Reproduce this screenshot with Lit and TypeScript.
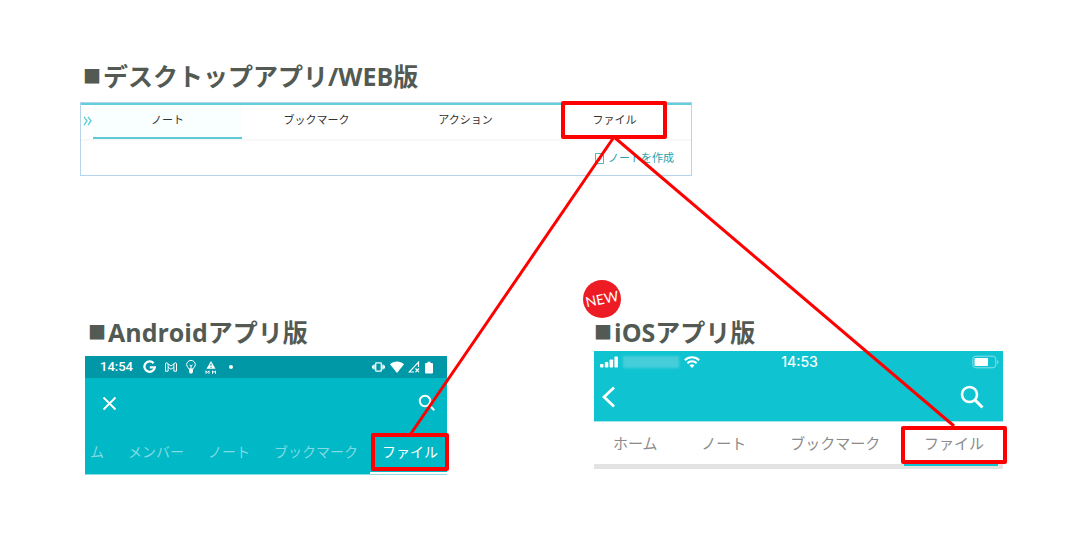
import { LitElement, html, css, svg } from "lit";
import { customElement, state } from "lit/decorators.js";

interface Point {
  x: number;
  y: number;
}

@customElement("app-root")
export class AppRoot extends LitElement {
  static styles = css`
    :host {
      display: block;
      position: relative;
      min-height: 100vh;
      background: #fff;
      box-sizing: border-box;
      padding: 58px 74px 24px 80px;
      font-family: "Open Sans", "Noto Sans CJK JP", sans-serif;
      color: #333;
    }
    * {
      box-sizing: border-box;
    }
    button,
    a {
      font: inherit;
      color: inherit;
      background: none;
      border: 0;
      padding: 0;
      margin: 0;
      text-decoration: none;
      white-space: nowrap;
    }
    svg {
      display: block;
      flex: none;
    }
    h2 {
      display: flex;
      align-items: center;
      gap: 2px;
      margin: 0;
      height: 36px;
      padding-left: 3px;
      font-size: 25px;
      line-height: 36px;
      font-weight: 700;
      color: #535a53;
      white-space: nowrap;
    }
    .square {
      font-size: 18px;
    }
    .mark {
      position: relative;
      display: inline-block;
    }
    .mark::after {
      content: "";
      position: absolute;
      z-index: 2;
      top: 50%;
      left: 50%;
      width: 106px;
      height: 38px;
      margin: -19px 0 0 -53px;
      border: 4px solid #f00;
      border-radius: 2px;
      box-sizing: border-box;
    }
    .mark.narrow::after {
      width: 78px;
      margin-left: -39px;
    }
    .lines {
      position: absolute;
      inset: 0;
      width: 100%;
      height: 100%;
      z-index: 3;
      pointer-events: none;
    }

    .desktop {
      width: 66.3%;
      margin-bottom: 138px;
    }
    .desktop .panel {
      margin-top: 8px;
      border: 1px solid #b5d3ea;
    }
    .desktop nav {
      display: flex;
      border-top: 2px solid #5fd0da;
      border-bottom: 2px solid #f8f8f8;
      padding-right: 2px;
      font-size: 11px;
      line-height: 16px;
      height: 38px;
    }
    .desktop .expand {
      width: 12px;
      display: flex;
      justify-content: center;
      align-items: center;
      padding-bottom: 2px;
      color: #5fcdd7;
    }
    .desktop .tab {
      flex: 1;
      padding-bottom: 2px;
      border-bottom: 2px solid transparent;
    }
    .desktop .tab.on {
      background: #f9feff;
      border-color: #5bcad3;
    }
    .desktop .tools {
      display: flex;
      justify-content: flex-end;
      padding: 0 17px;
      height: 34px;
    }
    .desktop .create {
      display: flex;
      align-items: center;
      gap: 4px;
      font-size: 11px;
      line-height: 16px;
      color: #2aa0ab;
    }

    .phones {
      display: grid;
      grid-template-columns: minmax(0, 362fr) minmax(0, 409fr);
      column-gap: 147px;
      padding-left: 5px;
      align-items: start;
    }
    .bar,
    .status {
      display: flex;
      align-items: center;
      justify-content: space-between;
      color: #fff;
    }
    .group {
      display: flex;
      align-items: center;
    }

    .android .screen {
      margin-top: 6px;
      background: #00b8c6;
      border-bottom: 1px solid #8adfe6;
    }
    .android .status {
      height: 22px;
      padding: 0 12px 0 15px;
      background: #0097a7;
      font: 500 13px/16px Roboto, sans-serif;
    }
    .android .icons {
      gap: 9px;
      margin-left: 10px;
    }
    .android .sys {
      gap: 3px;
    }
    .android .bar {
      height: 52px;
      padding: 0 11px 2px 17px;
    }
    .android nav {
      display: flex;
      justify-content: flex-end;
      height: 44px;
      font-size: 14px;
      line-height: 20px;
      color: #80dbe2;
    }
    .android .tab {
      padding: 2px 12px 0;
      border-bottom: 2px solid transparent;
    }
    .android .tab.on {
      padding-right: 9px;
      color: #fff;
      border-color: #fff;
    }

    .ios {
      position: relative;
    }
    .ios h2 {
      padding-left: 0;
    }
    .badge {
      position: absolute;
      top: -34px;
      left: -11px;
      width: 38px;
      height: 38px;
      border-radius: 50%;
      background: #ed1c24;
      color: #fff;
      font: 400 14px/38px Lato, sans-serif;
      text-align: center;
    }
    .badge span {
      display: block;
      transform: rotate(-12deg);
    }
    .ios .screen {
      margin-top: 1px;
    }
    .ios .status {
      display: grid;
      grid-template-columns: 1fr auto 1fr;
      height: 22px;
      padding: 0 4px 0 6px;
      background: #10c3d1;
      font: 500 14px/16px Inter, sans-serif;
    }
    .ios .sys {
      gap: 5px;
    }
    .carrier {
      width: 56px;
      height: 12px;
      background: #45ced9;
      filter: blur(1px);
    }
    .ios .battery {
      justify-self: end;
    }
    .ios .bar {
      height: 48px;
      padding: 0 19px 0 8px;
      background: #10c3d1;
    }
    .ios nav {
      display: flex;
      justify-content: space-between;
      height: 48px;
      padding: 0 19px;
      border-top: 1px solid #a6e6eb;
      border-bottom: 5px solid #e3e3e3;
      font-size: 15px;
      line-height: 20px;
      color: #8b8b8b;
    }
    .ios .mark::after {
      margin-top: -17px;
    }
    .ios .tab.on {
      position: relative;
    }
    .ios .tab.on::before {
      content: "";
      position: absolute;
      left: -20px;
      right: -14px;
      bottom: -2px;
      height: 2px;
      background: #10c3d1;
    }
  `;

  @state() private points: Point[] = [];
  private observer = new ResizeObserver(() => this.measure());

  firstUpdated() {
    this.measure();
    this.observer.observe(this);
    document.fonts.ready.then(() => this.measure());
  }

  disconnectedCallback() {
    super.disconnectedCallback();
    this.observer.disconnect();
  }

  // The lines join the bottom of the first marked tab to the tops of the others.
  private measure() {
    const base = this.getBoundingClientRect();
    const marks = [...this.renderRoot.querySelectorAll(".mark")];
    this.points = marks.map((m, i) => {
      const r = m.getBoundingClientRect();
      const half = i === 0 ? 17 : -17;
      return {
        x: Math.round(r.left + r.width / 2 - base.left),
        y: Math.round(r.top + r.height / 2 - base.top + half),
      };
    });
  }

  private renderLines() {
    const [from, ...to] = this.points;
    return html`<svg class="lines" aria-hidden="true">
      ${to.map(
        (p) => svg`<line x1=${from.x} y1=${from.y} x2=${p.x} y2=${p.y} stroke="#f00" stroke-width="3" />`
      )}
    </svg>`;
  }

  private renderDesktop() {
    return html`<section class="desktop">
      <h2><span class="square">■</span>デスクトップアプリ/WEB版</h2>
      <div class="panel">
        <nav>
          <button class="expand" aria-label="展開">
            <svg width="9" height="10" viewBox="0 0 9 10" fill="none" stroke="currentColor" stroke-width="1.4">
              <path d="M1 .8l3 4.200-3 4.200M5 .8l3 4.200-3 4.200" />
            </svg>
          </button>
          <button class="tab on">ノート</button>
          <button class="tab">ブックマーク</button>
          <button class="tab">アクション</button>
          <button class="tab"><span class="mark">ファイル</span></button>
        </nav>
        <div class="tools">
          <a class="create" href="#">
            <svg width="9" height="11" viewBox="0 0 9 11" fill="none" stroke="currentColor" stroke-width="0.8">
              <path d="M.5 .5h8v10h-8zM4.500 4v4M2.500 6h4" />
            </svg>
            ノートを作成
          </a>
        </div>
      </div>
    </section>`;
  }

  private renderAndroid() {
    return html`<section class="android">
      <h2><span class="square">■</span>Androidアプリ版</h2>
      <div class="screen">
        <div class="status">
          <div class="group">
            <span>14:54</span>
            <div class="group icons">
              <svg width="13" height="14" viewBox="0 0 13 14" fill="none" stroke="#fff" stroke-width="2.300">
                <path d="M10.600 3.200A5.200 5.200 0 1 0 11.800 7.300H6.800" />
              </svg>
              <svg width="12" height="10" viewBox="0 0 12 10" fill="none" stroke="#fff" stroke-width="1">
                <path d="M.5 9.200V1.600Q.7.400 1.900.9L6 4l4.100-3.100q1.200-.5 1.400.7v7.600H8.900V5.200L6 7.300 3.100 5.200v4zM3.100 5.200V1.900M8.900 5.200V1.900" />
              </svg>
              <svg width="10" height="14" viewBox="0 0 10 14" fill="none" stroke="#fff" stroke-width="1">
                <path d="M3 9C2.500 7.500.7 6.800.7 4.700a4.300 4.300 0 0 1 8.600 0C9.300 6.800 7.500 7.500 7 9zM3.500 5l1.500 1 1.500-1M5 6v3" />
                <path d="M3 9h4v3l-1 1.500H4L3 12z" fill="#fff" stroke="none" />
              </svg>
              <svg width="12" height="13" viewBox="0 0 12 13">
                <path d="M6 0l4.500 7.800h-9z" fill="#fff" />
                <path d="M6 2.600v2.600M6 6v1" stroke="#0097a7" stroke-width="1" />
                <path d="M1 12.800V9.800l1.500 1.700L4 9.800v3M7.500 12.800V9.800L9 11.500l1.500-1.700v3" fill="none" stroke="#fff" />
              </svg>
              <svg width="12" height="6" viewBox="0 0 12 6"><circle cx="5" cy="3" r="2" fill="#fff" /></svg>
            </div>
          </div>
          <div class="group sys">
            <svg width="14" height="10" viewBox="0 0 14 10" fill="none" stroke="#fff" stroke-width="1.300">
              <rect x="3.700" y=".8" width="5.600" height="8.400" rx=".8" />
              <path d="M2.100 2.500v5M.7 3.500v3M10.900 2.500v5M12.300 3.500v3" />
            </svg>
            <svg width="16" height="12" viewBox="0 0 16 12">
              <path d="M8 12L1 3.200C3 1.300 5.500.5 8 .5s5 .8 7 2.700z" fill="#fff" />
            </svg>
            <svg width="12" height="12" viewBox="0 0 12 12" fill="none" stroke="#fff" stroke-width="1.200">
              <path d="M6 11H1.200L10.500 1.200V6M7.500 7.500l3.500 3.700M11 7.500l-3.500 3.700" />
            </svg>
            <svg width="12" height="13" viewBox="0 0 12 13">
              <path d="M4.500 2V.7h3V2H9a1 1 0 0 1 1 1v8.500a1 1 0 0 1-1 1H3a1 1 0 0 1-1-1V3a1 1 0 0 1 1-1z" fill="#fff" />
            </svg>
          </div>
        </div>
        <div class="bar">
          <button aria-label="閉じる">
            <svg width="15" height="15" viewBox="0 0 15 15" stroke="#fff" stroke-width="1.900">
              <path d="M1.500 1.500l12 12M13.500 1.500l-12 12" />
            </svg>
          </button>
          <button aria-label="検索">
            <svg width="18" height="18" viewBox="0 0 18 18" fill="none" stroke="#fff" stroke-width="2">
              <circle cx="7" cy="7" r="5.200" />
              <path d="M10.800 10.800l5.500 5.500" />
            </svg>
          </button>
        </div>
        <nav>
          <button class="tab">ム</button>
          <button class="tab">メンバー</button>
          <button class="tab">ノート</button>
          <button class="tab">ブックマーク</button>
          <button class="tab on"><span class="mark narrow">ファイル</span></button>
        </nav>
      </div>
    </section>`;
  }

  private renderIos() {
    return html`<section class="ios">
      <div class="badge"><span>NEW</span></div>
      <h2><span class="square">■</span>iOSアプリ版</h2>
      <div class="screen">
        <div class="status">
          <div class="group sys">
            <svg width="18" height="12" viewBox="0 0 18 12" fill="#fff">
              <rect x="0" y="8" width="3.500" height="3.500" rx=".8" />
              <rect x="4.800" y="6" width="3.500" height="5.500" rx=".8" />
              <rect x="9.600" y="3.500" width="3.500" height="8" rx=".8" />
              <rect x="14.400" y=".5" width="3.500" height="11" rx=".8" />
            </svg>
            <span class="carrier"></span>
            <svg width="16" height="12" viewBox="0 0 16 12" fill="none" stroke="#fff" stroke-width="2">
              <path d="M.8 4.300a10.300 10.300 0 0 1 14.400 0M3.400 7.200a6.600 6.600 0 0 1 9.200 0" />
              <path d="M8 12L5.600 9.500a3.400 3.400 0 0 1 4.800 0z" fill="#fff" stroke="none" />
            </svg>
          </div>
          <span>14:53</span>
          <svg class="battery" width="27" height="14" viewBox="0 0 27 14" fill="none">
            <rect x=".8" y="1.200" width="23" height="11.600" rx="3" stroke="#8be0e7" />
            <rect x="2.500" y="3" width="13.500" height="8" rx="1" fill="#fff" />
            <path d="M25.300 5v4q1.200-.6 1.200-2t-1.200-2z" fill="#8be0e7" />
          </svg>
        </div>
        <div class="bar">
          <button aria-label="戻る">
            <svg width="14" height="22" viewBox="0 0 14 22" fill="none" stroke="#fff" stroke-width="2.800">
              <path d="M12 1.500L2 11l10 9.500" />
            </svg>
          </button>
          <button aria-label="検索">
            <svg width="24" height="24" viewBox="0 0 24 24" fill="none" stroke="#fff" stroke-width="2.600">
              <circle cx="9.500" cy="9.500" r="7.500" />
              <path d="M15 15l7.500 7.500" stroke-width="3" />
            </svg>
          </button>
        </div>
        <nav>
          <button class="tab">ホーム</button>
          <button class="tab">ノート</button>
          <button class="tab">ブックマーク</button>
          <button class="tab on"><span class="mark">ファイル</span></button>
        </nav>
      </div>
    </section>`;
  }

  render() {
    return html`
      ${this.renderDesktop()}
      <div class="phones">${this.renderAndroid()}${this.renderIos()}</div>
      ${this.renderLines()}
    `;
  }
}
